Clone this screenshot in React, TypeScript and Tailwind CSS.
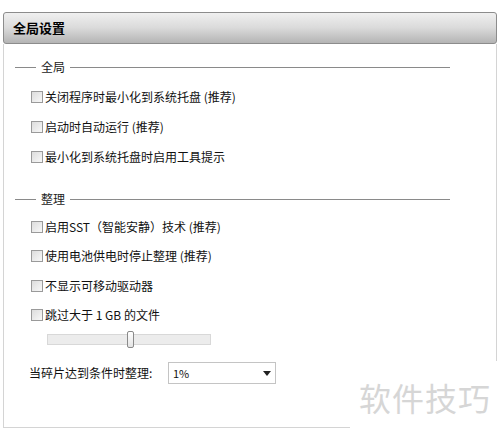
import React from "react";

const font = { fontFamily: '"Noto Sans CJK SC", "Liberation Sans", sans-serif' };

function Section({ title }: { title: string }) {
  return (
    <div className="flex items-center h-[20px] pl-[11px] pr-[46px]">
      <div className="w-[21px] h-px bg-[#8a8a8a]" />
      <span className="px-[5px] text-[12px] leading-none text-[#222]">{title}</span>
      <div className="flex-1 h-px bg-[#8a8a8a]" />
    </div>
  );
}

function Check({ label, tall }: { label: string; tall?: boolean }) {
  return (
    <div className={tall ? "flex items-center h-[30px] pl-[27px]" : "flex items-center h-[29.5px] pl-[27px]"}>
      <div className="w-[12px] h-[12px] border border-[#9a9a9a] bg-gradient-to-br from-[#dcdcdc] to-[#f8f8f8] mr-[2px]" />
      <span className="text-[12px] leading-none text-[#111]">{label}</span>
    </div>
  );
}

export default function App() {
  return (
    <div className="relative w-[500px] h-[432px] bg-white pt-[12px] px-[3px] overflow-hidden" style={font}>
      {/* 标题栏 */}
      <div className="h-[32px] rounded-[3px] border border-[#8c8c8c] bg-gradient-to-b from-[#f0f0f0] via-[#dadada] to-[#b4b4b4] flex items-center pl-[9px]">
        <span className="text-[13px] font-bold text-black">全局设置</span>
      </div>

      {/* 内容 */}
      <div className="h-[384px] border-l border-r border-b border-[#d4d4d4] pt-[13px]">
        <Section title="全局" />
        <div className="mt-[5px]">
          <Check tall label="关闭程序时最小化到系统托盘 (推荐)" />
          <Check tall label="启动时自动运行 (推荐)" />
          <Check tall label="最小化到系统托盘时启用工具提示" />
        </div>

        <div className="mt-[17px]">
          <Section title="整理" />
        </div>
        <div className="mt-[3px]">
          <Check label="启用SST（智能安静）技术 (推荐)" />
          <Check label="使用电池供电时停止整理 (推荐)" />
          <Check label="不显示可移动驱动器" />
          <Check label="跳过大于 1 GB 的文件" />
        </div>

        {/* 滑块 */}
        <div className="pl-[43px] mt-[4px]">
          <div className="relative w-[164px] h-[11px] border border-[#d8d8d8] bg-[#ececec]">
            <div className="absolute left-[79px] -top-[4px] w-[7px] h-[17px] rounded-[2px] border border-[#8a8a8a] bg-gradient-to-b from-white to-[#e4e4e4]" />
          </div>
        </div>

        {/* 下拉 */}
        <div className="flex items-center mt-[17px] pl-[25px]">
          <span className="w-[139px] text-[12px] text-[#111]">当碎片达到条件时整理:</span>
          <div className="w-[108px] h-[22px] border border-[#c4c4c4] bg-white flex items-center justify-between px-[4px]">
            <span className="text-[11px] text-[#111]">1%</span>
            <svg width="8" height="5" viewBox="0 0 8 5"><path d="M0 0h8L4 5z" fill="#222" /></svg>
          </div>
        </div>
      </div>

      {/* 水印 */}
      <div className="absolute left-[350px] top-[361px] w-[150px] h-[71px] bg-white flex items-center justify-center">
        <span className="text-[32px] text-[#d6d6d6] tracking-[1px]">软件技巧</span>
      </div>
    </div>
  );
}
